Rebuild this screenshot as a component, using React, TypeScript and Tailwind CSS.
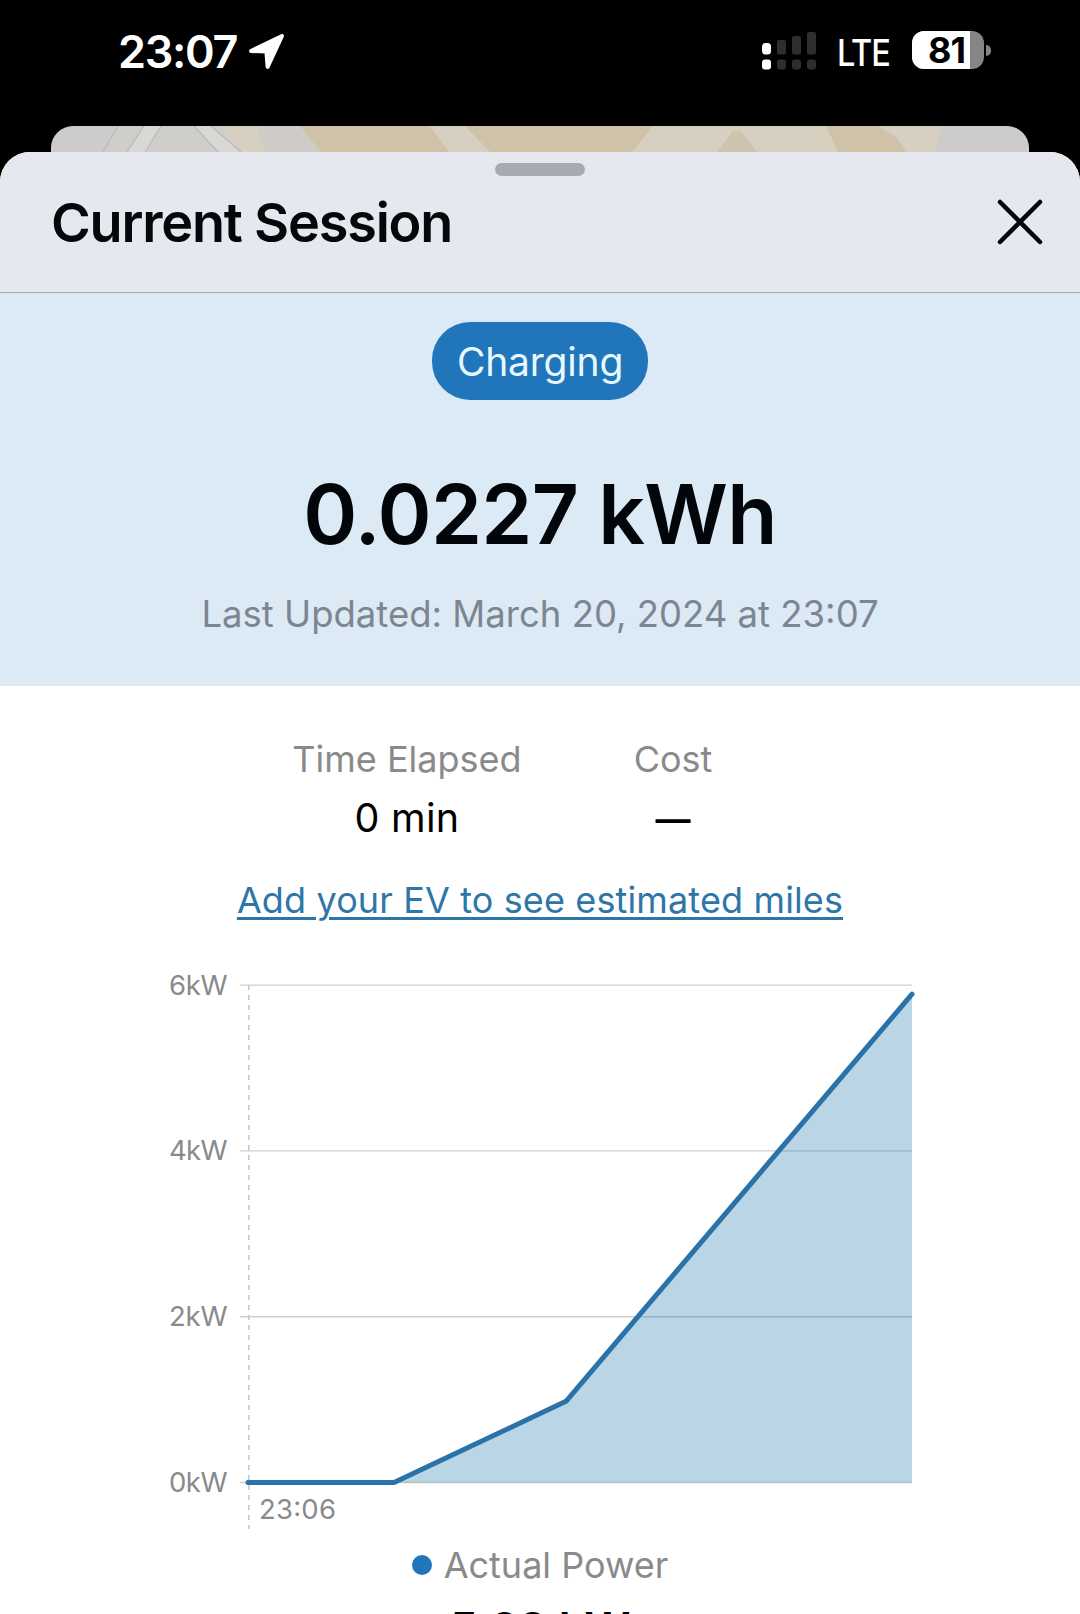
const stats = [
  { label: 'Time Elapsed', value: '0 min', width: 'w-[232px]', valueStyle: 'mt-[12px] text-[39.5px] tracking-[0.3px]' },
  { label: 'Cost', value: '—', width: 'w-[84px]', valueStyle: 'mt-[13px] text-[35px] font-semibold' },
];

const signalBars = [
  { x: 0, top: 11, radius: 3.5, color: '#ffffff' },
  { x: 15, top: 8, radius: 2, color: '#2e2e2e' },
  { x: 30, top: 4, radius: 2, color: '#2e2e2e' },
  { x: 45, top: 0, radius: 2, color: '#2e2e2e' },
];

const samples = [
  { x: 88, kw: 0 },
  { x: 234, kw: 0 },
  { x: 406, kw: 0.98 },
  { x: 752, kw: 5.89 },
];

const ticks = [6, 4, 2, 0];

const ZERO_Y = 522.5;
const toY = (kw: number) => ZERO_Y - kw * 82.9;

function StatusBar() {
  return (
    <div className="flex h-[126px] items-start pl-[118px] pr-[89px] pt-[31px]">
      <span className="mt-px w-[131px] whitespace-nowrap text-[45px] font-semibold leading-[39px] tracking-[-1.3px] text-white">23:07</span>
      <svg className="mt-[3px]" width="36" height="36" viewBox="0 0 36 36">
        <path d="M2 17 33 2 18.6 32.8 17.4 17.4Z" fill="white" stroke="white" strokeWidth="4" strokeLinejoin="round" />
      </svg>
      <svg className="ml-auto mt-px" width="54" height="38" viewBox="0 0 54 38">
        {signalBars.map(({ x, top, radius, color }) => (
          <g key={x} fill={color}>
            <rect x={x} y={top} width="9" height={22.5 - top} rx={radius} />
            <rect x={x} y="27.5" width="9" height="10" rx="3" />
          </g>
        ))}
      </svg>
      <span className="ml-[21px] w-[75px] origin-left scale-x-[0.88] text-[37px] font-medium leading-[43px] tracking-[-1.4px] text-white">LTE</span>
      <div className="relative flex h-[38px] w-[72px] rounded-[12px] bg-[#858585]">
        <div className="h-full w-[58px] rounded-l-[12px] bg-white" />
        <span className="absolute left-[16px] top-0 text-[36px] font-bold leading-[38px] tracking-[-1px] text-black">81</span>
      </div>
      <div className="ml-[2px] mt-[14px] h-[11px] w-[5px] rounded-r-full bg-[#858585]" />
    </div>
  );
}

function MapStrip() {
  return (
    <div className="mx-[51px] h-[26px] overflow-hidden rounded-t-[22px] bg-[#cecccb]">
      <svg width="978" height="26" viewBox="0 0 978 26">
        <path d="M67 0H190L240 26H52Z" fill="#d0cecb" />
        <path d="M170 0H890L884 26H190Z" fill="#d7d0c1" />
        <path d="M205 0H250L270 26H215Z" fill="#cfcbc6" />
        <path d="M249 0H379L398 26H270Z" fill="#cfc2a9" />
        <path d="M414 0H602L581 26H439Z" fill="#cfc2a9" />
        <path d="M682 5 690 5 706 26H666Z" fill="#cfc3ae" />
        <path d="M775 0H828L846 12 855 26H787Z" fill="#cfc2a9" />
        <path d="M93 0H110L94 26H76Z" fill="#d8d8d6" />
        <path d="M143 0H160L190 26H167Z" fill="#d8d8d6" />
        <path d="M67 0 52 26M93 0 76 26M110 0 94 26M143 0 167 26M160 0 190 26" stroke="#b9b9b8" strokeWidth="1.2" />
      </svg>
    </div>
  );
}

function Header() {
  return (
    <header className="h-[141px] rounded-t-[30px] border-b border-[#a5a9b2] bg-[#e5e8ef] pt-[11px]">
      <div className="mx-auto h-[13px] w-[90px] rounded-full bg-[#a7abb1]" />
      <div className="flex items-center justify-between pl-[51px] pr-[37px] pt-[11px]">
        <h1 className="whitespace-nowrap text-[54px] font-semibold leading-[72px] tracking-[-1.2px] text-[#05070b]">Current Session</h1>
        <svg className="-mt-[2px]" width="46" height="46" viewBox="0 0 46 46">
          <path d="M3 3 43 43M43 3 3 43" stroke="#05070b" strokeWidth="4.5" strokeLinecap="round" />
        </svg>
      </div>
    </header>
  );
}

function Summary() {
  return (
    <section className="flex h-[393px] flex-col items-center bg-[#dceaf5] pt-[29px]">
      <div className="flex h-[78px] w-[216px] items-center justify-center rounded-[38px] bg-[#2176bb]">
        <span className="mt-[2px] text-[39px] leading-[78px] tracking-[-0.2px] text-[#e6f9ff]">Charging</span>
      </div>
      <div className="mt-[65px] whitespace-nowrap text-[82px] font-semibold leading-[100px] tracking-[-0.7px] text-[#02050a]">0.0227 kWh</div>
      <div className="mt-[26px] whitespace-nowrap text-[36.5px] leading-[46px] text-[#7d8690]">
        Last Updated: March 20, 2024 at 23:07
      </div>
    </section>
  );
}

function PowerChart() {
  const line = samples.map(({ x, kw }) => `${x},${toY(kw)}`).join(' ');

  return (
    <svg className="mx-auto block" width="760" height="576" viewBox="0 0 760 576">
      {ticks.map((kw) => (
        <g key={kw}>
          <line x1="80" x2="752" y1={toY(kw)} y2={toY(kw)} stroke="#cfcfcf" strokeWidth="1.4" />
          <text x="9" y={toY(kw) + 9.5} fontSize="27.5" fill="#8a8a8a" textLength="58.5">{kw}kW</text>
        </g>
      ))}
      <line x1="88.8" x2="88.8" y1="25" y2="569" stroke="#c8c8c8" strokeWidth="1.6" strokeDasharray="5 5" />
      <polygon points={`${line} 752,${ZERO_Y}`} fill="#2176ae" fillOpacity="0.31" />
      <polyline points={line} fill="none" stroke="#2a72a8" strokeWidth="5" strokeLinecap="round" strokeLinejoin="round" />
      <text x="99" y="558.7" fontSize="27.5" fill="#8a8a8a" textLength="77">23:06</text>
    </svg>
  );
}

export default function App() {
  return (
    <div className="h-[1614px] w-[1080px] overflow-hidden bg-black font-['Inter',sans-serif]">
      <StatusBar />
      <MapStrip />
      <div className="h-[1500px] rounded-t-[30px] bg-white">
        <Header />
        <Summary />
        <div className="flex h-[156px] justify-center gap-[108px] pr-[74px] pt-[50px]">
          {stats.map(({ label, value, width, valueStyle }) => (
            <div key={label} className={`flex flex-col items-center whitespace-nowrap ${width}`}>
              <span className="text-[36px] leading-[46px] text-[#8a8a8a]">{label}</span>
              <span className={`leading-[48px] text-black ${valueStyle}`}>{value}</span>
            </div>
          ))}
        </div>
        <div className="mt-[34px] text-center">
          <a className="whitespace-nowrap text-[36px] leading-[48px] tracking-[0.13px] text-[#2f76a8] underline decoration-[2.5px] underline-offset-[4px]">
            Add your EV to see estimated miles
          </a>
        </div>
        <div className="mt-[36px]">
          <PowerChart />
        </div>
        <div className="mt-[6px] flex items-center justify-center gap-[12px]">
          <span className="h-[20px] w-[20px] rounded-full bg-[#2176bb]" />
          <span className="text-[36px] leading-[46px] text-[#8a8a8a]">Actual Power</span>
        </div>
        <div className="mt-[14px] text-center text-[45px] font-semibold leading-[54px] text-black">5.89 kW</div>
      </div>
    </div>
  );
}
